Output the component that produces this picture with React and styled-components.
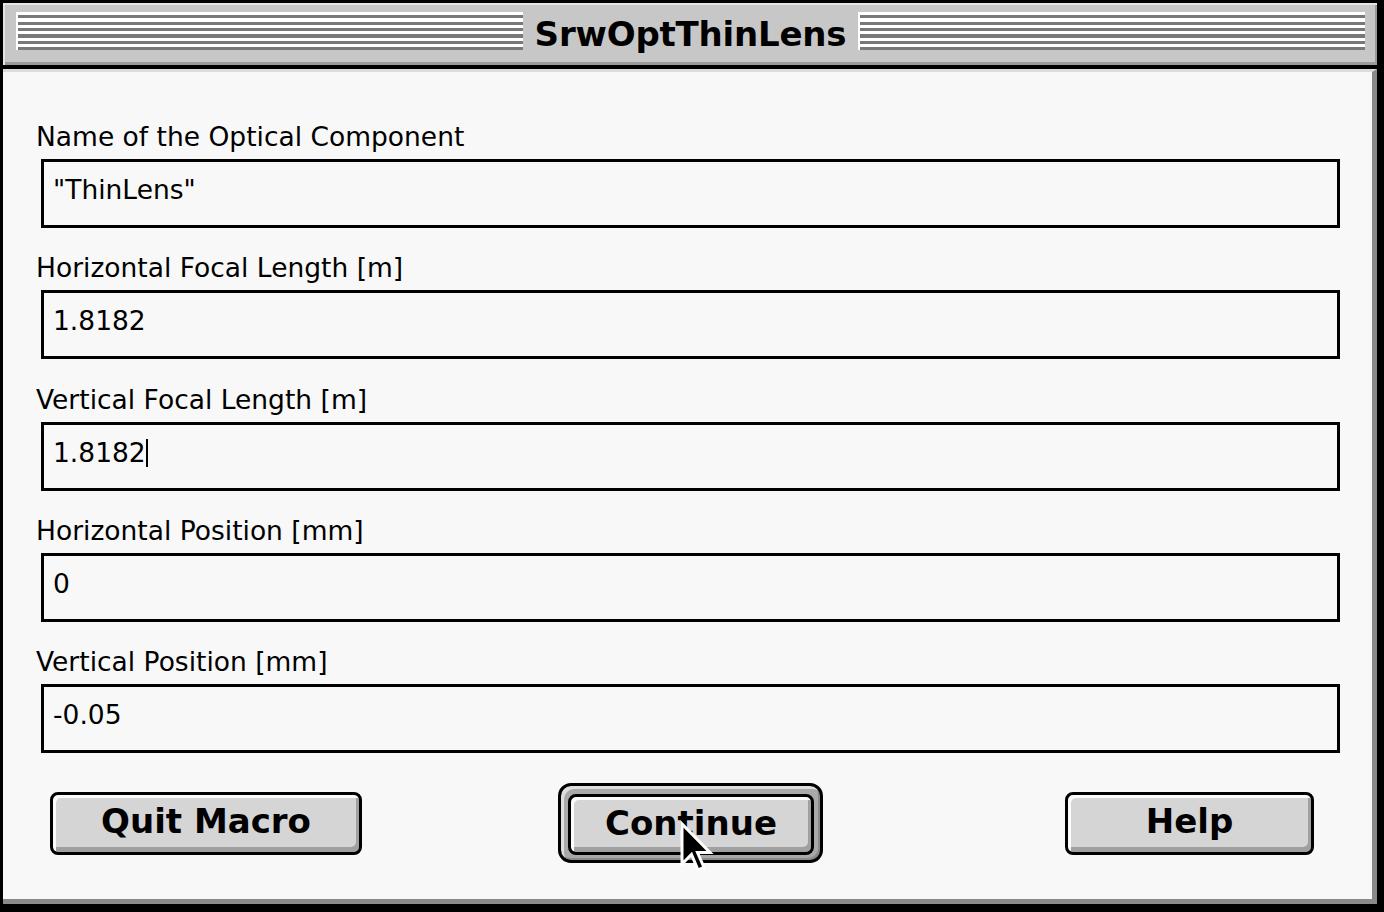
import React from "react";
import styled, { createGlobalStyle } from "styled-components";

const Global = createGlobalStyle`
  html, body { margin: 0; padding: 0; background: #000; }
  body { font-family: "DejaVu Sans", "Liberation Sans", sans-serif; }
  * { box-sizing: border-box; }
`;

const Window = styled.div`
  position: relative;
  width: 1384px;
  height: 912px;
  background: #000;
  border-style: solid;
  border-color: #000;
  border-width: 3px 7px 8px 3px;
  display: flex;
  flex-direction: column;
  overflow: hidden;
`;

const TitleBar = styled.div`
  flex: none;
  height: 66px;
  display: flex;
  align-items: flex-start;
  padding: 9px 12px 0 13px;
  background: #c7c7c7;
  box-shadow: inset 2px 2px 0 #e4e4e4, inset -2px -3px 0 #9a9a9a;
  border-bottom: 4px solid #000;
`;

const Stripes = styled.div`
  flex: 1;
  height: 38.4px;
  background: repeating-linear-gradient(
    to bottom,
    #ffffff 0px,
    #ffffff 3.2px,
    #787878 3.2px,
    #787878 6.4px
  );
  box-shadow: inset 2px 0 0 #ffffff;
`;

const Title = styled.div`
  flex: none;
  padding: 0 12px;
  margin-top: 2px;
  font-family: "DejaVu Sans", sans-serif;
  font-weight: bold;
  font-size: 34px;
  line-height: 40px;
  color: #000;
  letter-spacing: -0.2px;
`;

const Content = styled.div`
  flex: 1;
  background: #f8f8f8;
  border-top: 3px solid #dcdcdc;
  border-right: 5px solid #8a8a8a;
  border-bottom: 5px solid #8a8a8a;
  padding: 50px 32px 0 33px;
  display: flex;
  flex-direction: column;
  gap: 25.3px;
`;

const Field = styled.div`
  display: flex;
  flex-direction: column;
`;

const Label = styled.div`
  font-size: 26.5px;
  line-height: 30px;
  height: 30px;
  color: #000;
  margin-bottom: 7px;
  white-space: nowrap;
`;

const Box = styled.div`
  margin-left: 5px;
  height: 69px;
  border: 3px solid #000;
  background: #f8f8f8;
  padding: 13px 9px 0 9px;
  font-size: 26.5px;
  line-height: 30px;
  color: #000;
  white-space: nowrap;
`;

const Caret = styled.span`
  display: inline-block;
  width: 2px;
  height: 28px;
  background: #000;
  vertical-align: -5px;
`;

const ButtonRow = styled.div`
  display: grid;
  grid-template-columns: 1fr auto 1fr;
  align-items: center;
  margin: 5px -32px 0 -33px;
  padding: 0 41px 0 47px;
`;

const Button = styled.div`
  width: ${(p) => p.$w}px;
  height: ${(p) => p.$h || 63}px;
  justify-self: ${(p) => p.$align || "center"};
  margin-right: ${(p) => p.$mr || 0}px;
  border: 3px solid #000;
  border-radius: 8px;
  background: #d5d5d5;
  box-shadow: inset 3px 3px 0 #fbfbfb, inset -3px -5px 0 #a0a0a0;
  display: flex;
  align-items: center;
  justify-content: center;
  padding-bottom: 4px;
  font-family: "DejaVu Sans", sans-serif;
  font-weight: bold;
  font-size: 34px;
  color: #000;
  white-space: nowrap;
`;

const DefaultRing = styled.div`
  justify-self: center;
  width: 265px;
  height: 80px;
  border: 3px solid #000;
  border-radius: 13px;
  background: #a9a9a9;
  box-shadow: inset 3px 3px 0 #dedede, inset -2px -2px 0 #8a8a8a;
  padding: 8px 6px 5px 7px;
  display: flex;
`;

const Cursor = styled.svg`
  position: absolute;
  left: 675px;
  top: 817px;
  pointer-events: none;
`;

const fields = [
  { label: "Name of the Optical Component", value: '"ThinLens"' },
  { label: "Horizontal Focal Length [m]", value: "1.8182" },
  { label: "Vertical Focal Length [m]", value: "1.8182", caret: true },
  { label: "Horizontal Position [mm]", value: "0" },
  { label: "Vertical Position [mm]", value: "-0.05" },
];

export default function App() {
  return (
    <>
      <Global />
      <Window>
        <TitleBar>
          <Stripes />
          <Title>SrwOptThinLens</Title>
          <Stripes />
        </TitleBar>
        <Content>
          {fields.map((f) => (
            <Field key={f.label}>
              <Label>{f.label}</Label>
              <Box>
                {f.value}
                {f.caret && <Caret />}
              </Box>
            </Field>
          ))}
          <ButtonRow>
            <Button $w={312} $align="start">Quit Macro</Button>
            <DefaultRing>
              <Button $w={246} $h={61}>Continue</Button>
            </DefaultRing>
            <Button $w={249} $align="end" $mr={17}>Help</Button>
          </ButtonRow>
        </Content>
        <Cursor width="44" height="56" viewBox="0 0 44 56">
          <polygon
            points="4,4 4,44 13.5,34.5 20,50 26,47.5 19.5,32.5 32,32.5"
            fill="#000"
            stroke="#fff"
            strokeWidth="3"
            strokeLinejoin="miter"
          />
        </Cursor>
      </Window>
    </>
  );
}
